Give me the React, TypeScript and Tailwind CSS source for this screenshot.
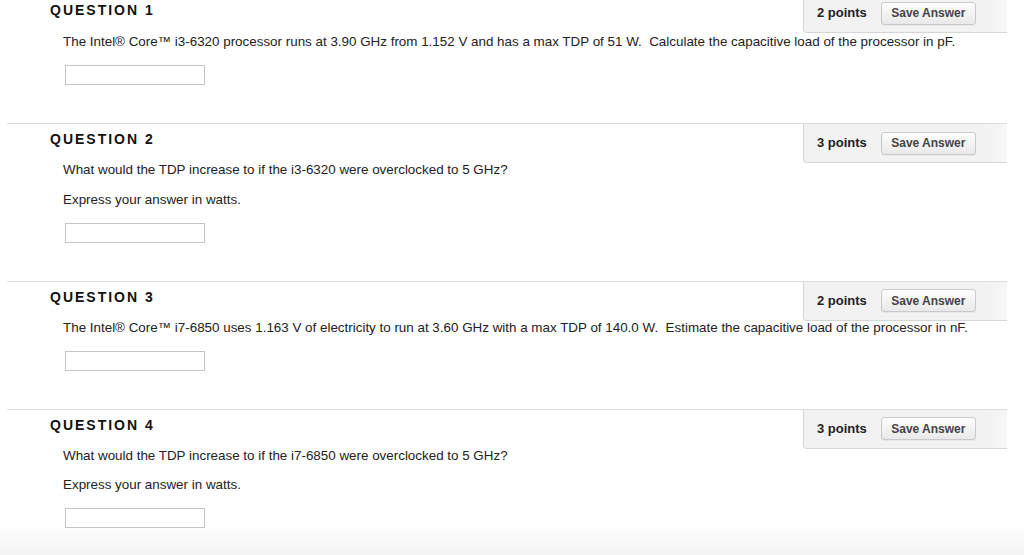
import React from "react";

type Question = {
  n: number;
  points: number;
  lines: string[];
};

const QUESTIONS: Question[] = [
  {
    n: 1,
    points: 2,
    lines: [
      "The Intel® Core™ i3-6320 processor runs at 3.90 GHz from 1.152 V and has a max TDP of 51 W.\u00a0 Calculate the capacitive load of the processor in pF.",
    ],
  },
  {
    n: 2,
    points: 3,
    lines: [
      "What would the TDP increase to if the i3-6320 were overclocked to 5 GHz?",
      "Express your answer in watts.",
    ],
  },
  {
    n: 3,
    points: 2,
    lines: [
      "The Intel® Core™ i7-6850 uses 1.163 V of electricity to run at 3.60 GHz with a max TDP of 140.0 W.\u00a0 Estimate the capacitive load of the processor in nF.",
    ],
  },
  {
    n: 4,
    points: 3,
    lines: [
      "What would the TDP increase to if the i7-6850 were overclocked to 5 GHz?",
      "Express your answer in watts.",
    ],
  },
];

function QuestionBlock({ q, first }: { q: Question; first: boolean }) {
  return (
    <section className={first ? "-mt-[4px]" : "border-t border-[#dcdcdc]"}>
      {/* header row */}
      <div className={`flex items-start justify-between ${first ? "h-[37px]" : "h-[39px]"}`}>
        <h3
          className={`pl-[43px] text-[14px] font-bold leading-[16px] tracking-[2px] text-[#111] ${
            first ? "pt-[6px]" : "pt-[7px]"
          }`}
        >
          QUESTION {q.n}
        </h3>
        <div
          className={`flex w-[204px] items-center rounded-bl-[4px] border-b border-l border-[#d6d6d6] bg-[linear-gradient(to_right,#f2f2f2_90%,#f7f7f7)] pl-[13px] ${
            first ? "h-[37px] pb-[2px]" : "h-[39px]"
          }`}
        >
          <span className="text-[13px] font-bold text-[#222]">{q.points} points</span>
          <button className="ml-[14px] h-[23px] w-[95px] rounded-[3px] border border-[#c9c9c9] bg-[linear-gradient(to_bottom,#fdfdfd,#e9e9e9)] text-[12px] font-bold text-[#444] shadow-[0_1px_0_rgba(0,0,0,0.04)]">
            Save Answer
          </button>
        </div>
      </div>

      {/* body */}
      <div className={`flex flex-col pb-[38px] pl-[56px] ${first ? "pt-[2px]" : ""}`}>
        <div className="flex flex-col gap-[15.5px]">
          {q.lines.map((l, i) => (
            <p key={i} className="text-[13.4px] leading-[14px] text-[#222]">
              {l}
            </p>
          ))}
        </div>
        <input
          type="text"
          className="ml-[2px] mt-[16px] h-[20px] w-[140px] border border-[#c4c4c4] bg-white outline-none"
        />
      </div>
    </section>
  );
}

export default function App() {
  return (
    <div
      className="h-[555px] w-[1024px] overflow-hidden bg-[linear-gradient(to_bottom,#ffffff_525px,#f3f3f3_555px)]"
      style={{ fontFamily: '"Liberation Sans", Arial, Helvetica, sans-serif' }}
    >
      <div className="ml-[7px] w-[1000px]">
        {QUESTIONS.map((q, i) => (
          <QuestionBlock key={q.n} q={q} first={i === 0} />
        ))}
      </div>
    </div>
  );
}
